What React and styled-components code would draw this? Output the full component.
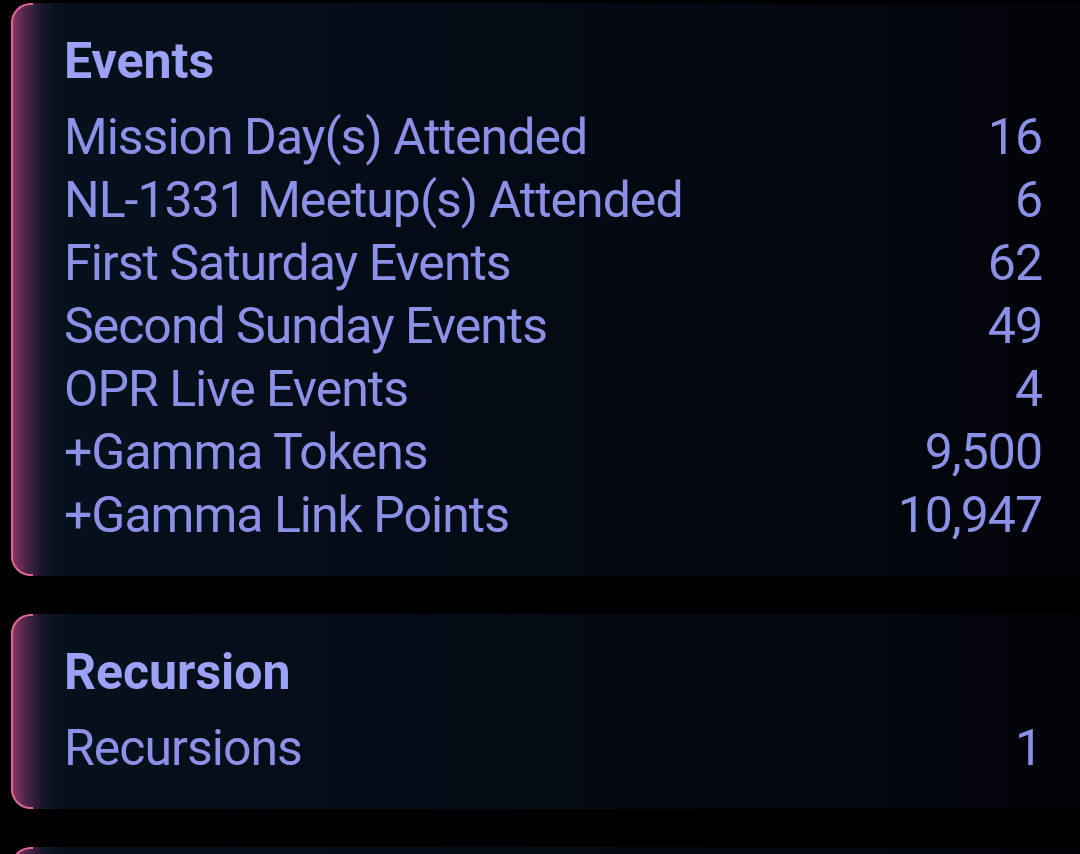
import React from "react";
import styled, { createGlobalStyle } from "styled-components";

const Global = createGlobalStyle`
  html, body { margin: 0; padding: 0; background: #000; }
  body { font-family: Roboto, "Liberation Sans", sans-serif; }
`;

const Page = styled.div`
  display: flex;
  flex-direction: column;
  gap: 38px;
  padding: 3px 0 0 11px;
  min-height: 854px;
  box-sizing: border-box;
`;

const Card = styled.section`
  position: relative;
  padding: 27px 38px 29px 53px;
  min-height: ${(p) => p.$minHeight || 0}px;
  border-radius: 20px 0 0 20px;
  background:
    linear-gradient(90deg, rgba(180, 66, 124, 0.8) 0px, rgba(140, 54, 110, 0.55) 14px, rgba(80, 36, 84, 0.3) 30px, rgba(30, 20, 50, 0.1) 44px, rgba(0, 0, 0, 0) 56px),
    linear-gradient(90deg, #07111e 0%, #050b16 40%, #020409 100%);
  &::before {
    content: "";
    position: absolute;
    left: 0;
    top: 0;
    bottom: 0;
    width: 22px;
    border: 2px solid #dc6691;
    border-right: none;
    border-radius: 20px 0 0 20px;
    box-sizing: border-box;
    pointer-events: none;
  }
`;

const Title = styled.h2`
  margin: 0 0 13px;
  font-size: 50px;
  line-height: 63px;
  font-weight: 700;
  color: #9ba1f4;
  letter-spacing: 0;
`;

const Row = styled.div`
  display: flex;
  justify-content: space-between;
  align-items: baseline;
  font-size: 50px;
  line-height: 63px;
  font-weight: 400;
  color: #8b91e6;
  letter-spacing: -1px;
`;

const Label = styled.span``;
const Value = styled.span``;

const sections = [
  {
    title: "Events",
    rows: [
      ["Mission Day(s) Attended", "16"],
      ["NL-1331 Meetup(s) Attended", "6"],
      ["First Saturday Events", "62"],
      ["Second Sunday Events", "49"],
      ["OPR Live Events", "4"],
      ["+Gamma Tokens", "9,500"],
      ["+Gamma Link Points", "10,947"],
    ],
  },
  {
    title: "Recursion",
    rows: [["Recursions", "1"]],
  },
];

export default function App() {
  return (
    <>
      <Global />
      <Page>
        {sections.map((s) => (
          <Card key={s.title}>
            <Title>{s.title}</Title>
            {s.rows.map(([l, v]) => (
              <Row key={l}>
                <Label>{l}</Label>
                <Value>{v}</Value>
              </Row>
            ))}
          </Card>
        ))}
        <Card $minHeight={120} />
      </Page>
    </>
  );
}
